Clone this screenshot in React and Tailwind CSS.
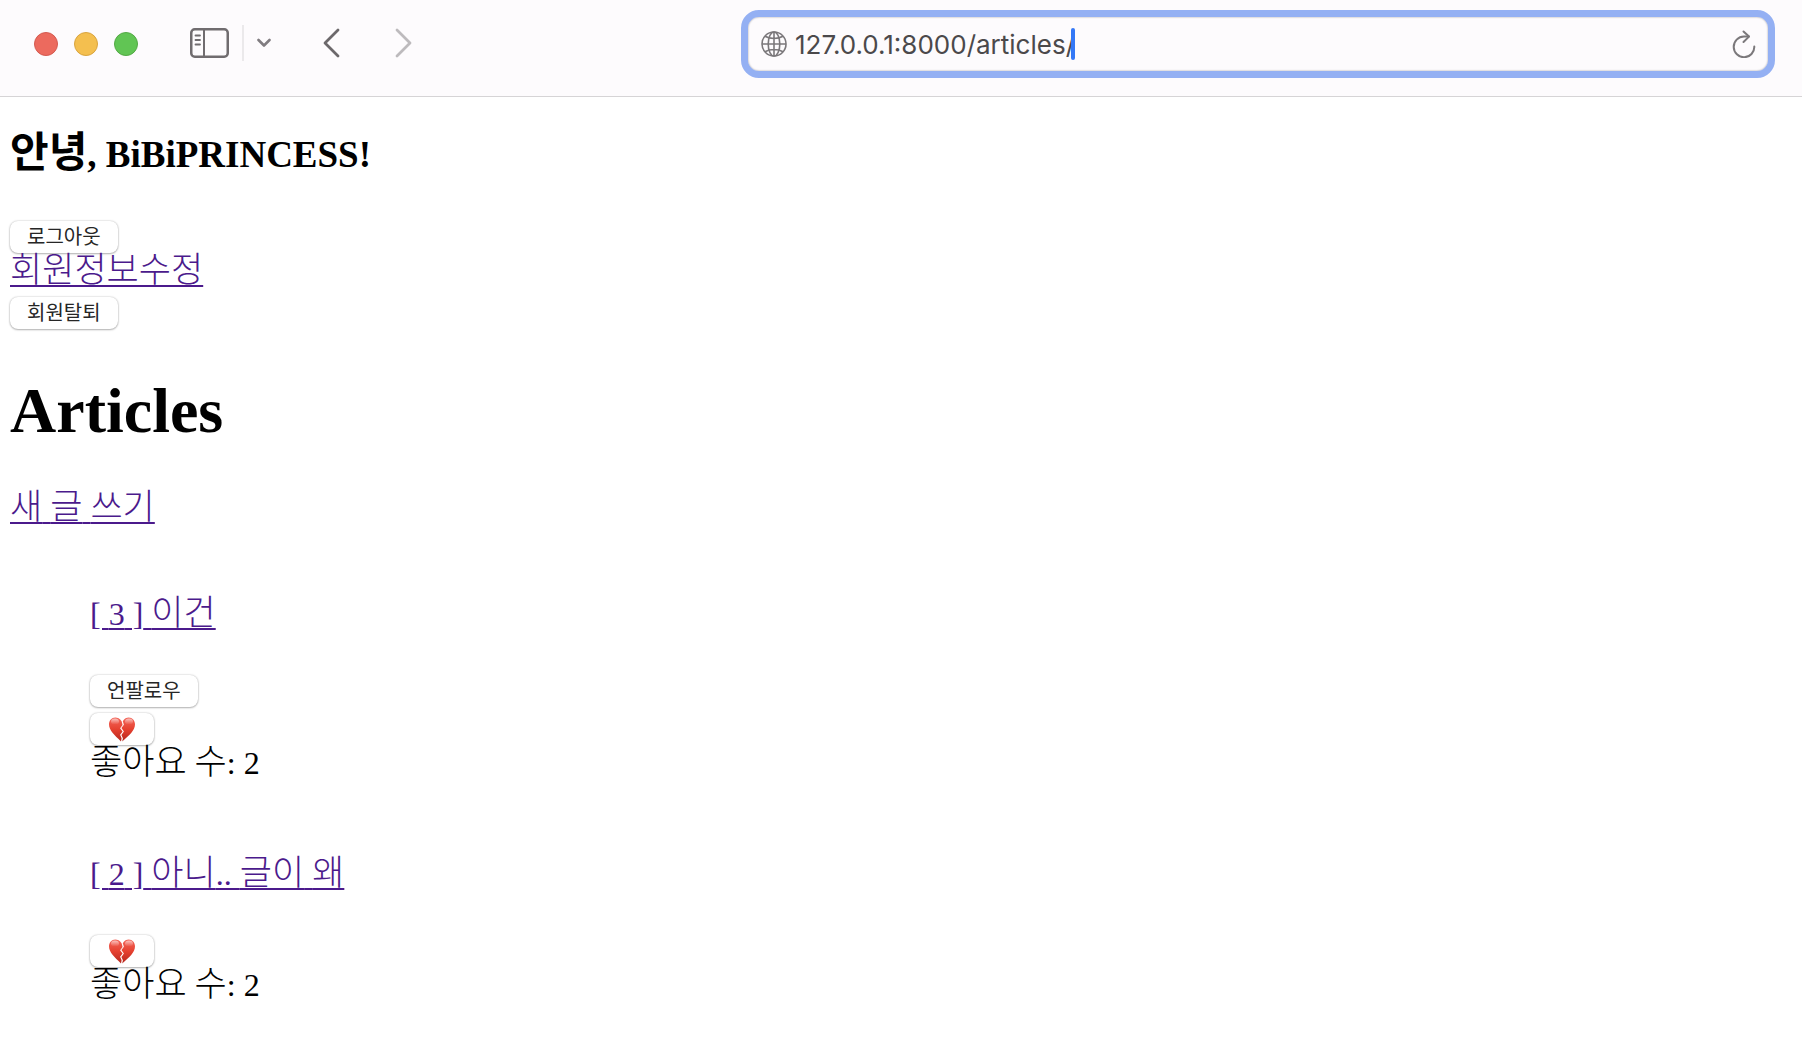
import { useState } from 'react'

const articles = [
  { id: 3, title: ['이건'], canUnfollow: true, likes: 2 },
  { id: 2, title: ['아니', '.. ', '글이', ' ', '왜'], canUnfollow: false, likes: 2 },
]

// Hangul runs a little larger than the Latin text next to it
function Ko({ children }) {
  return <span className="text-[35px] leading-[0px] font-light">{children}</span>
}

function PageLink({ children }) {
  return (
    <a
      href="#"
      className="text-[32px] leading-[36px] text-[#4b1a8c] underline decoration-2 underline-offset-3"
    >
      {children}
    </a>
  )
}

function FormButton({ children, ...props }) {
  return (
    <button
      type="button"
      className="flex h-8 items-center rounded-lg bg-white px-[17px] font-['Inter','Noto_Sans_CJK_KR',sans-serif] text-[20px] leading-6 text-[#262626] shadow-[0_0_2px_rgba(0,0,0,0.25),0_1px_2px_rgba(0,0,0,0.25)]"
      {...props}
    >
      {children}
    </button>
  )
}

function BrokenHeart() {
  return (
    <svg width="30" height="25" viewBox="0 0 30 25" aria-hidden="true">
      <defs>
        <linearGradient id="heart" x1="0" y1="0" x2="0" y2="1">
          <stop offset="0" stopColor="#f4685c" />
          <stop offset="0.5" stopColor="#e5402f" />
          <stop offset="1" stopColor="#b5271d" />
        </linearGradient>
        <linearGradient id="shine" x1="0" y1="0" x2="0" y2="1">
          <stop offset="0" stopColor="#fff" stopOpacity="0.6" />
          <stop offset="1" stopColor="#fff" stopOpacity="0" />
        </linearGradient>
      </defs>
      <path
        d="M14.600 4.200C13 1.300 10.300.5 8.300.5 4.600.5 2 3.500 2 7.300c0 6 5.500 10.800 12 17.200l.6-3.200-1.500-3.500 2.500-3.300-2.500-3.300 2.500-3.300z"
        fill="url(#heart)"
      />
      <path
        d="M15.800 4.200C17.300 1.300 19.700.5 21.700.5 25.400.5 28 3.500 28 7.300c0 6.300-5.800 11-12.800 17.200l.7-3.300-1.500-3.300 2.500-3.400-2.500-3.400 2.500-3.300z"
        fill="url(#heart)"
      />
      <ellipse cx="8" cy="4.500" rx="4" ry="3" fill="url(#shine)" />
      <ellipse cx="22" cy="4.500" rx="4" ry="3" fill="url(#shine)" />
    </svg>
  )
}

function Toolbar() {
  const [url, setUrl] = useState('127.0.0.1:8000/articles/')

  return (
    <header className="grid h-[97px] grid-cols-[741fr_1061fr] items-center border-b border-[#d6d4d6] bg-[#fdfbfd] pb-2">
      <div className="flex items-center pl-[34px]">
        <div className="flex gap-4">
          <span className="size-6 rounded-full border border-[#d45a50] bg-[#ec6a5e]" />
          <span className="size-6 rounded-full border border-[#d9a43f] bg-[#f4bf4f]" />
          <span className="size-6 rounded-full border border-[#53a945] bg-[#61c554]" />
        </div>

        <div className="ml-[52px] flex items-center pb-0.5">
          <button type="button" aria-label="Sidebar">
            <svg width="39" height="30" viewBox="0 0 39 30" fill="none" stroke="#706c6f">
              <rect x="1.250" y="1.250" width="36.500" height="27.500" rx="3.500" strokeWidth="2.500" />
              <path d="M14 1v28" strokeWidth="2" />
              <path d="M5.500 7.500h4.500M5.500 12h4.500M5.500 16.500h4.500" strokeWidth="1.800" strokeLinecap="round" />
            </svg>
          </button>
          <span className="ml-[13px] h-9 w-[2px] bg-[#ebe9eb]" />
          <button type="button" aria-label="Tab groups" className="ml-[13px]">
            <svg width="14" height="10" viewBox="0 0 14 10" fill="none" stroke="#807c80" strokeWidth="2.600" strokeLinecap="round" strokeLinejoin="round">
              <path d="M1.500 2 7 7.500 12.500 2" />
            </svg>
          </button>
          <button type="button" aria-label="Back" className="ml-[52px]">
            <svg width="17" height="30" viewBox="0 0 17 30" fill="none" stroke="#6c686b" strokeWidth="2.800" strokeLinecap="round" strokeLinejoin="round">
              <path d="M15 2 2 15l13 13" />
            </svg>
          </button>
          <button type="button" aria-label="Forward" className="ml-[55px]">
            <svg width="17" height="30" viewBox="0 0 17 30" fill="none" stroke="#bdbabd" strokeWidth="2.800" strokeLinecap="round" strokeLinejoin="round">
              <path d="m2 2 13 13L2 28" />
            </svg>
          </button>
        </div>
      </div>

      <div className="pr-[27px]">
        <div className="flex h-[68px] items-center rounded-[18px] border-7 border-[#94b0f3] bg-[#fdfbfd] pr-3 pl-[13px] shadow-[inset_0_0_2px_rgba(0,0,0,0.4)]">
          <svg width="26" height="26" viewBox="0 0 26 26" fill="none" stroke="#7b787b" strokeWidth="1.600">
            <circle cx="13" cy="13" r="12" />
            <ellipse cx="13" cy="13" rx="5.800" ry="12" />
            <path d="M13 1v24M1 13h24M4 5.200c5 3 13 3 18 0M4 20.800c5-3 13-3 18 0" />
          </svg>
          <input
            type="text"
            aria-label="Address"
            value={url}
            onChange={(e) => setUrl(e.target.value)}
            className="ml-2 field-sizing-content bg-transparent pt-0.5 font-['Inter',sans-serif] text-[26px] leading-8 text-[#4b494b] outline-none"
          />
          <span className="-ml-1 h-8 w-1 rounded-full bg-[#3478f6]" />
          <button type="button" aria-label="Reload" className="ml-auto">
            <svg width="24" height="28" viewBox="0 0 24 28" fill="none" stroke="#7b787b" strokeWidth="2" strokeLinecap="round" strokeLinejoin="round">
              <path d="M16.800 6.600H12A10.300 10.300 0 1 0 22.300 16.500" />
              <path d="m11.500 1.500 5.500 5.100-5.500 5.400" />
            </svg>
          </button>
        </div>
      </div>
    </header>
  )
}

function Article({ article }) {
  return (
    <article className="text-[32px] leading-[36px]">
      <p>
        <PageLink>
          [ {article.id} ]{' '}
          {article.title.map((part, i) => (i % 2 === 0 ? <Ko key={i}>{part}</Ko> : part))}
        </PageLink>
      </p>
      <div className="mt-[43px] flex flex-col items-start gap-[6px]">
        {article.canUnfollow && <FormButton>언팔로우</FormButton>}
        <FormButton aria-label="좋아요 취소">
          <BrokenHeart />
        </FormButton>
      </div>
      <p>
        <Ko>좋아요</Ko> <Ko>수</Ko>: {article.likes}
      </p>
    </article>
  )
}

export default function App() {
  return (
    <div className="min-h-screen bg-white font-['Liberation_Serif','Noto_Sans_CJK_KR',serif] text-black">
      <Toolbar />
      <main className="px-[10px] pt-9 text-[32px] leading-[36px]">
        <h3 className="text-[37px] leading-[44px] font-bold">
          <span className="text-[42px] leading-[0px]">안녕</span>, BiBiPRINCESS!
        </h3>

        <div className="mt-11">
          <FormButton>로그아웃</FormButton>
          <p>
            <PageLink>
              <Ko>회원정보수정</Ko>
            </PageLink>
          </p>
          <div className="mt-2">
            <FormButton>회원탈퇴</FormButton>
          </div>
        </div>

        <h1 className="mt-[46px] text-[64px] leading-[72px] font-bold">Articles</h1>
        <p className="mt-[43px]">
          <PageLink>
            <Ko>새</Ko> <Ko>글</Ko> <Ko>쓰기</Ko>
          </PageLink>
        </p>

        <div className="mt-[70px] flex flex-col gap-[75px] pl-20">
          {articles.map((article) => (
            <Article key={article.id} article={article} />
          ))}
        </div>
      </main>
    </div>
  )
}
